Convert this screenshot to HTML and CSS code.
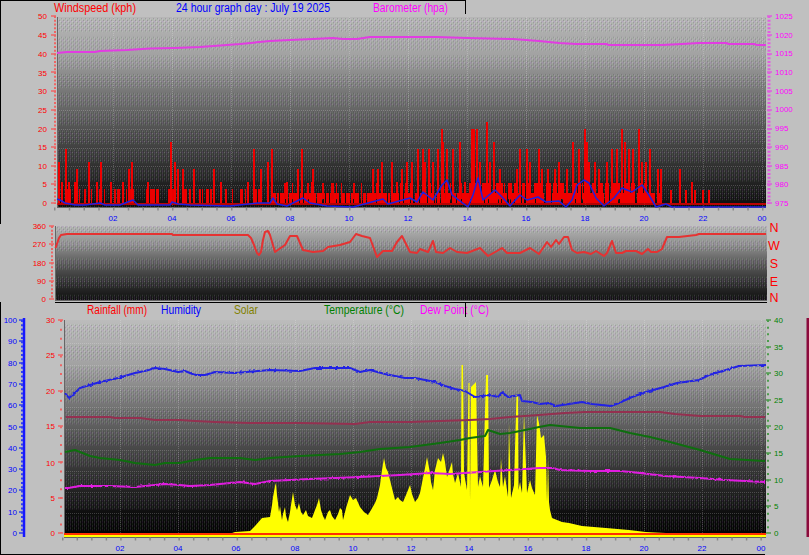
FILE: index.html
```html
<!DOCTYPE html>
<html lang="en">
  <head>
    <meta charset="UTF-8" />
    <meta name="viewport" content="width=device-width, initial-scale=1.0" />
    <title>24 hour graph</title>
    <link rel="stylesheet" href="styles.css">
  </head>
  <body>
    <div class="page">
      <!-- windspeed + barometer -->
      <svg class="graph graph-wind" width="809" height="222" viewBox="0 0 809 222">
        <defs>
          <pattern id="dots" width="4" height="4" patternUnits="userSpaceOnUse">
            <rect class="dot-light" x="0" y="0" width="1" height="1" />
            <rect class="dot-light" x="2" y="2" width="1" height="1" />
            <rect class="dot-violet" x="2" y="0" width="1" height="1" />
            <rect class="dot-green" x="0" y="2" width="1" height="1" />
            <rect class="dot-dark" x="1" y="1" width="1" height="1" />
            <rect class="dot-dark" x="3" y="3" width="1" height="1" />
          </pattern>
          <pattern id="bands-wind" width="8" height="18.7" y="17" patternUnits="userSpaceOnUse">
            <rect class="band" x="0" y="1" width="8" height="14" />
          </pattern>
          <pattern id="bands-dir" width="8" height="18.3" y="226" patternUnits="userSpaceOnUse">
            <rect class="band" x="0" y="0" width="8" height="7" />
            <rect class="band" x="0" y="14" width="8" height="4.3" />
          </pattern>
          <pattern id="bands-outside" width="8" height="21.3" y="322" patternUnits="userSpaceOnUse">
            <rect class="band" x="0" y="2" width="8" height="15" />
          </pattern>
          <linearGradient id="fade-wind" x1="0" y1="0" x2="0" y2="1">
            <stop offset="0" stop-color="#b6b6b6" />
            <stop offset="0.2" stop-color="#a2a2a2" />
            <stop offset="0.4" stop-color="#757575" />
            <stop offset="0.6" stop-color="#505050" />
            <stop offset="0.8" stop-color="#2e2e2e" />
            <stop offset="1" stop-color="#0c0c0c" />
          </linearGradient>
          <linearGradient id="fade-dir" x1="0" y1="0" x2="0" y2="1">
            <stop offset="0" stop-color="#b4b4b4" />
            <stop offset="0.25" stop-color="#909090" />
            <stop offset="0.5" stop-color="#5c5c5c" />
            <stop offset="0.75" stop-color="#333333" />
            <stop offset="1" stop-color="#101010" />
          </linearGradient>
          <linearGradient id="fade-outside" x1="0" y1="0" x2="0" y2="1">
            <stop offset="0" stop-color="#bcbcbc" />
            <stop offset="0.22" stop-color="#a0a0a0" />
            <stop offset="0.38" stop-color="#787878" />
            <stop offset="0.55" stop-color="#505050" />
            <stop offset="0.72" stop-color="#303030" />
            <stop offset="0.9" stop-color="#0c0c0c" />
            <stop offset="1" stop-color="#000000" />
          </linearGradient>
          <filter id="jitter" filterUnits="userSpaceOnUse" x="0" y="0" width="809" height="600">
            <feTurbulence type="fractalNoise" baseFrequency="0.35" numOctaves="1" seed="4" result="noise" />
            <feDisplacementMap in="SourceGraphic" in2="noise" scale="3" xChannelSelector="R" yChannelSelector="G" />
          </filter>
        </defs>

        <path class="frame" d="M0 .5H465.5V14M.5 0V222" />

        <rect class="fill-wind" x="57" y="17" width="709" height="190" />
        <rect class="stipple-wind" x="57" y="17" width="709" height="190" />
        <path class="grid" d="M57 110.5H766M57 129.5H766M57 148H766M57 166.5H766M57 185H766M113 17V207M172 17V207M231 17V207M290 17V207M349 17V207M408 17V207M467 17V207M526 17V207M585 17V207M644 17V207M703 17V207M762 17V207" />
        <path class="axis-edge" d="M57 17V207H766" />

        <path class="wind-low" d="M58 196H270" />
        <path class="wind-low-b" d="M272 198H660" />
        <path class="wind-mid" d="M272 191H470" />
        <path class="wind-mid-b" d="M470 191H650" />
        <path class="wind-bars" d="M59 203V162M62 203V182M66 203V149M69 203V182M75 203V182M77 203V169M89 203V162M97 203V182M101 203V162M111 203V182M123 203V182M129 203V169M132 203V162M148 203V182M171 203V142M175 203V162M178 203V169M183 203V169M194 203V169M214 203V169M221 203V182M248 203V182M254 203V149M261 203V169M268 203V162M272 203V149M287 203V182M298 203V169M302 203V149M312 203V182M313 203V169M373 203V169M378 203V169M382 203V162M392 203V162M397 203V182M402 203V169M407 203V162M412 203V162M418 203V149M423 203V149M425 203V162M429 203V149M433 203V162M438 203V149M442 203V129M443 203V142M447 203V149M453 203V149M460 203V142M465 203V182M472 203V129M474 203V129M477 203V129M480 203V162M487 203V122M490 203V162M494 203V142M500 203V169M517 203V169M520 203V149M527 203V149M530 203V162M539 203V149M542 203V169M548 203V169M555 203V169M559 203V162M567 203V169M573 203V142M579 203V149M585 203V129M587 203V142M589 203V162M595 203V162M599 203V169M607 203V162M612 203V149M617 203V149M622 203V129M625 203V142M629 203V149M633 203V149M639 203V129M642 203V162M646 203V162M650 203V149M658 203V169M661 203V169M671 203V190M680 203V169M686 203V190M692 203V182M695 203V190M703 203V190M709 203V190" />
        <path class="wind-base" d="M57 204H766" />
        <polyline class="line wind-avg" points="57,199 60,200 65,203 70,204 75,205 85,205 100,203 105,205 120,205 133,200 138,205 170,205 172,202 178,204 190,205 230,206 258,203 270,203 273,198 277,204 287,206 303,198 310,203 327,206 353,207 383,199 388,204 410,198 417,202 423,192 433,200 442,185 447,180 452,195 460,201 468,207 473,195 478,178 483,200 495,190 503,198 510,206 520,195 527,200 538,197 546,202 559,201 566,207 572,200 577,185 584,180 589,183 596,198 604,206 614,198 622,188 632,192 642,185 649,195 656,207 666,204 672,207 766,207" />
        <polyline class="line baro" points="57,53 67,52 95,52 100,51 127,50 150,48.5 175,48 200,47 240,44 270,41 290,40 313,39 333,38 343,39 357,39 370,37 437,37 467,38 513,39 539,41 559,43 576,44 606,44 609,45 662,45 682,44 699,43 726,43 729,44 754,44 757,45 766,45" />

        <path class="ticks-red" d="M55 16V204" />
        <path class="major-red" d="M51 16H56M51 35H56M51 54H56M51 72H56M51 91H56M51 110H56M51 129H56M51 147H56M51 166H56M51 184H56M51 203H56" />
        <path class="ticks-pink" d="M769 16V204" />
        <path class="major-pink" d="M767 16H772M767 35H772M767 54H772M767 72H772M767 91H772M767 110H772M767 129H772M767 147H772M767 166H772M767 184H772M767 203H772" />
        <path class="ticks-hour ticks-hour-wind" d="M54 209H766" />

        <text class="legend red" x="54" y="12" textLength="82" lengthAdjust="spacingAndGlyphs">Windspeed (kph)</text>
        <text class="legend blue" x="176" y="12" textLength="154" lengthAdjust="spacingAndGlyphs">24 hour graph day : July 19 2025</text>
        <text class="legend pink" x="373" y="12" textLength="75" lengthAdjust="spacingAndGlyphs">Barometer (hpa)</text>

        <g class="scale red end">
          <text x="47" y="19">50</text><text x="47" y="38">45</text><text x="47" y="57">40</text><text x="47" y="76">35</text><text x="47" y="94">30</text><text x="47" y="113">25</text><text x="47" y="132">20</text><text x="47" y="150">15</text><text x="47" y="169">10</text><text x="47" y="187">5</text><text x="47" y="206">0</text>
        </g>
        <g class="scale pink">
          <text x="775" y="19">1025</text><text x="775" y="38">1020</text><text x="775" y="56">1015</text><text x="775" y="75">1010</text><text x="775" y="94">1005</text><text x="775" y="112">1000</text><text x="775" y="131">995</text><text x="775" y="150">990</text><text x="775" y="169">985</text><text x="775" y="187">980</text><text x="775" y="206">975</text>
        </g>
        <g class="scale blue middle">
          <text x="113" y="221">02</text><text x="172" y="221">04</text><text x="231" y="221">06</text><text x="290" y="221">08</text><text x="349" y="221">10</text><text x="408" y="221">12</text><text x="467" y="221">14</text><text x="526" y="221">16</text><text x="585" y="221">18</text><text x="644" y="221">20</text><text x="703" y="221">22</text><text x="762" y="221">00</text>
        </g>
      </svg>

      <!-- wind direction -->
      <svg class="graph graph-dir" width="809" height="80" viewBox="0 222 809 80">
        <path class="frame" d="M.5 222V224" />
        <rect class="fill-dir" x="55" y="226" width="712" height="74" />
        <rect class="stipple-dir" x="55" y="226" width="712" height="74" />
        <path class="axis-edge" d="M55.5 226V300.5H767" />
        <polyline class="line dir" points="55.5,248 59,238 61,235 67,234 172,234 173,235 248,235 251,238 254,245 257,253 259,255 261,252 263,240 265,232 268,231 270,235 275,252 285,245 290,236 297,236 303,250 313,252 323,251 328,247 340,245 350,242 356,234 362,236 370,238 377,257 383,251 392,251 397,242 402,236 410,252 417,253 420,249 428,252 433,241 436,252 443,253 450,248 457,252 467,253 480,248 488,256 497,251 502,248 507,253 520,253 530,248 539,254 547,242 551,247 556,240 559,244 564,237 568,237 572,250 577,253 584,252 591,254 596,251 604,256 607,253 612,241 616,253 622,253 626,251 636,251 642,254 648,249 651,252 657,252 662,249 667,237 679,237 696,235 699,234 766,234" />
        <path class="ticks-red ticks-dir" d="M52 226V299" />
        <path class="major-red" d="M49 226H54M49 244H54M49 263H54M49 281H54M49 299H54" />
        <g class="scale red end">
          <text x="46" y="229">360</text><text x="46" y="247">270</text><text x="46" y="266">180</text><text x="46" y="284">90</text><text x="46" y="302">0</text>
        </g>
        <g class="compass red">
          <text x="774" y="232">N</text><text x="774" y="250">W</text><text x="774" y="268">S</text><text x="774" y="286">E</text><text x="774" y="302">N</text>
        </g>
      </svg>

      <!-- rainfall, humidity, solar, temperature, dew point -->
      <svg class="graph graph-outside" width="809" height="253" viewBox="0 302 809 253">
        <path class="frame" d="M.5 302V555M0 554.5H765M55 302.5H767M465.5 302V317" />
        <path class="side-bar" d="M808 318V537" />

        <rect class="fill-outside" x="64" y="320" width="702" height="217" />
        <rect class="stipple-outside" x="64" y="320" width="702" height="217" />
        <path class="grid" d="M64 343H766M64 365H766M64 386H766M64 407.5H766M64 429H766M64 450H766M64 471H766M64 492H766M64 513H766M120 320V537M178 320V537M236 320V537M295 320V537M353 320V537M411 320V537M469 320V537M528 320V537M586 320V537M644 320V537M702 320V537M761 320V537" />
        <path class="axis-edge" d="M64.5 320V537H766" />

        <polygon class="solar" points="232,537 232,533 235,532 250,531 255,526 262,518 270,517 272,505 273,497 275,486 276,483 277,495 278,503 279,512 280,506 282,520 283,514 285,507 286,516 288,522 290,512 291,505 293,492 295,505 297,510 299,503 301,512 303,515 306,510 308,516 312,518 315,510 317,505 319,498 321,510 323,516 325,520 328,512 330,510 332,516 335,520 338,514 340,508 342,510 343,520 346,508 350,495 353,500 356,498 360,507 364,512 368,515 371,510 375,503 377,498 380,485 382,470 384,458 386,468 388,472 390,480 393,492 395,500 398,497 400,500 403,502 406,495 410,485 412,494 415,502 418,498 420,493 423,478 425,468 427,457 430,473 431,482 433,490 435,470 438,458 441,462 443,453 445,462 447,477 450,468 452,462 453,474 455,483 458,473 461,487 461.5,365 463,365 464,473 467,490 468.5,383 469.5,383 470,502 471,387 476,382 478,487 480,476 483,487 486,375 488,375 489,488 492,480 495,470 498,482 500,487 501,458 503,487 505,476 508,497 509,423 511,498 514,485 516.5,395 518,395 518.5,490 520,482 522,493 524,413 527,493 530,480 532,488 535,495 537,415 539,423 541,438 544,435 546,457 547,502 548,457 549,502 550,510 552,518 562,522 569,523 582,526 606,528 629,530 646,532 666,533 680,537" />
        <path class="base-yellow" d="M64 536H766" />
        <path class="base-red" d="M64 534H766" />

        <polyline class="line jagged humidity" points="65,393 69,398 75,393 80,388 90,385 100,382 118,378 135,373 145,371 155,368 165,369 178,372 185,371 195,375 205,375 215,372 235,373 270,370 300,371 315,368 350,368 360,372 370,370 385,374 395,376 405,378 415,378 425,380 435,382 445,386 455,389 465,391 475,397 490,395 498,397 502,392 508,397 520,395 522,401 532,402 540,404 549,403 556,406 582,402 592,404 611,406 619,403 632,397 646,392 664,387 677,383 699,380 709,375 726,370 739,366 766,365" />
        <polyline class="line crimson" points="66,417 110,417 115,418 140,418 155,420 180,420 195,421 215,422 250,423 300,423 355,424 370,422 410,422 440,421 470,420 490,419 510,417 539,415 565,413 585,412 660,412 675,414 700,416 740,416 745,417 765,417" />
        <polyline class="line temperature" points="65,452 75,450 90,456 100,458 120,460 135,463 155,465 165,463 180,463 195,460 210,458 240,458 255,460 270,458 300,456 340,454 360,452 380,449 410,447 440,443 460,440 470,438 485,436 488,430 500,434 510,433 530,429 539,427 550,425 580,428 610,428 630,433 650,437 670,442 700,450 720,456 730,459 765,461" />
        <polyline class="line jagged dewpoint" points="65,488 68,488 80,486 110,486 135,487 155,485 165,484 180,485 190,486 210,485 240,482 255,484 270,481 310,479 360,477 400,475 430,473 450,474 480,472 510,470 539,468 552,468 560,470 590,471 620,471 640,473 665,476 700,478 725,480 765,482" />

        <path class="blue-axis" d="M24 318V537" />
        <path class="ticks-blue" d="M22 320V533" />
        <path class="major-blue" d="M19 320H23M19 341H23M19 363H23M19 384H23M19 405H23M19 427H23M19 448H23M19 469H23M19 490H23M19 512H23M19 533H23" />
        <path class="ticks-red ticks-rain" d="M61 320V533" />
        <path class="major-red" d="M58 320H63M58 355H63M58 391H63M58 426H63M58 462H63M58 498H63M58 533H63" />
        <path class="ticks-green" d="M768 320V533" />
        <path class="major-green" d="M766 320H771M766 347H771M766 373H771M766 400H771M766 426H771M766 453H771M766 480H771M766 506H771M766 533H771" />
        <path class="ticks-hour ticks-hour-outside" d="M62 539H766" />

        <text class="legend red" x="87" y="314" textLength="60" lengthAdjust="spacingAndGlyphs">Rainfall (mm)</text>
        <text class="legend blue" x="161" y="314" textLength="40" lengthAdjust="spacingAndGlyphs">Humidity</text>
        <text class="legend olive" x="234" y="314" textLength="24" lengthAdjust="spacingAndGlyphs">Solar</text>
        <text class="legend green" x="324" y="314" textLength="80" lengthAdjust="spacingAndGlyphs">Temperature (°C)</text>
        <text class="legend pink" x="420" y="314" textLength="69" lengthAdjust="spacingAndGlyphs">Dew Point (°C)</text>
        <path class="frame" d="M465.5 302V317" />

        <g class="scale blue end">
          <text x="17" y="323">100</text><text x="17" y="344">90</text><text x="17" y="366">80</text><text x="17" y="387">70</text><text x="17" y="408">60</text><text x="17" y="430">50</text><text x="17" y="451">40</text><text x="17" y="472">30</text><text x="17" y="493">20</text><text x="17" y="515">10</text><text x="17" y="536">0</text>
        </g>
        <g class="scale red end">
          <text x="55" y="323">30</text><text x="55" y="358">25</text><text x="55" y="394">20</text><text x="55" y="429">15</text><text x="55" y="466">10</text><text x="55" y="501">5</text><text x="55" y="536">0</text>
        </g>
        <g class="scale green">
          <text x="774" y="323">40</text><text x="774" y="350">35</text><text x="774" y="376">30</text><text x="774" y="403">25</text><text x="774" y="430">20</text><text x="774" y="456">15</text><text x="774" y="483">10</text><text x="774" y="509">5</text><text x="774" y="536">0</text>
        </g>
        <g class="scale blue middle">
          <text x="120" y="551">02</text><text x="178" y="551">04</text><text x="236" y="551">06</text><text x="295" y="551">08</text><text x="353" y="551">10</text><text x="411" y="551">12</text><text x="469" y="551">14</text><text x="528" y="551">16</text><text x="586" y="551">18</text><text x="644" y="551">20</text><text x="702" y="551">22</text><text x="761" y="551">00</text>
        </g>
      </svg>
    </div>
  </body>
</html>
```
FILE: styles.css
```css
body {
  margin: 0;
  background: #c0c0c0;
  font-family: "Liberation Sans", Arial, sans-serif;
}
.page {
  width: 809px;
  height: 555px;
  display: flex;
  flex-direction: column;
  overflow: hidden;
}
.graph {
  display: block;
  flex: none;
  overflow: visible;
}
path,
polyline,
polygon {
  fill: none;
}

/* backgrounds */
.fill-wind { fill: url(#fade-wind); }
.fill-dir { fill: url(#fade-dir); }
.fill-outside { fill: url(#fade-outside); }
.stipple-wind { fill: url(#bands-wind); }
.stipple-dir { fill: url(#bands-dir); }
.stipple-outside { fill: url(#bands-outside); }
.band { fill: url(#dots); }
.dot-light { fill: rgba(255, 255, 255, 0.24); }
.dot-dark { fill: rgba(0, 0, 0, 0.2); }
.dot-violet { fill: rgba(190, 90, 255, 0.2); }
.dot-green { fill: rgba(110, 255, 110, 0.14); }

/* frame and grid */
.frame {
  stroke: #000;
  stroke-width: 1;
  shape-rendering: crispEdges;
}
.side-bar {
  stroke: #8b0a3c;
  stroke-width: 3;
}
.grid {
  stroke: rgba(255, 255, 255, 0.2);
  stroke-width: 1;
  stroke-dasharray: 1 1;
  shape-rendering: crispEdges;
}
.axis-edge {
  stroke: #666;
  stroke-width: 1;
  shape-rendering: crispEdges;
}

/* series */
.line {
  stroke-width: 2;
  stroke-linejoin: round;
}
.jagged { filter: url(#jitter); }
.baro { stroke: #e23ce2; }
.wind-avg {
  stroke: #2020e0;
  stroke-width: 1.5;
}
.dir { stroke: #e63232; }
.humidity { stroke: #2222e4; }
.crimson { stroke: #943050; }
.temperature { stroke: #0e6e0e; }
.dewpoint { stroke: #e01ee0; }
.solar { fill: #ffff00; }
.base-yellow {
  stroke: #ffff00;
  stroke-width: 2;
}
.base-red {
  stroke: #ff3000;
  stroke-width: 2;
}
.wind-bars {
  stroke: #f00000;
  stroke-width: 2;
}
.wind-base {
  stroke: #f00000;
  stroke-width: 1.5;
}
.wind-low {
  stroke: #e80000;
  stroke-width: 14;
  stroke-dasharray: 2 1 1 3 3 1 2 8 1 4 2 5 1 7 3 2 1 9 2 1 3 6 1 3 4 12 2 2 5 1 3 9 2 1 4 2 1 6 3 2 2 8;
}
.wind-low-b {
  stroke: #f00000;
  stroke-width: 10;
  stroke-dasharray: 4 1 2 1 5 2 1 1 3 1 6 1 2 2 4 1;
}
.wind-mid {
  stroke: #e80000;
  stroke-width: 16;
  stroke-dasharray: 1 11 2 6 1 14 2 3 1 9 2 7 3 2 1 4;
}
.wind-mid-b {
  stroke: #f00000;
  stroke-width: 16;
  stroke-dasharray: 3 2 2 1 1 3 4 2 2 4 1 1;
}

/* axis ticks */
.ticks-red,
.major-red {
  stroke: #ee6464;
}
.ticks-red {
  stroke-width: 2;
  stroke-dasharray: 2 1.74;
}
.ticks-dir { stroke-dasharray: 2 1.66; }
.ticks-rain { stroke-dasharray: 2 6.85; }
.major-red,
.major-pink,
.major-blue,
.major-green {
  stroke-width: 1.5;
}
.ticks-pink,
.major-pink {
  stroke: #e05ee0;
}
.ticks-pink {
  stroke-width: 3;
  stroke-dasharray: 2 1.74;
}
.blue-axis {
  stroke: #1818ff;
  stroke-width: 2.5;
}
.ticks-blue,
.major-blue {
  stroke: #3040f0;
}
.ticks-blue {
  stroke-width: 2;
  stroke-dasharray: 2 2.26;
}
.ticks-green,
.major-green {
  stroke: #4c9c4c;
}
.ticks-green {
  stroke-width: 2;
  stroke-dasharray: 2 4.65;
}
.ticks-hour {
  stroke: #8a8a8a;
  stroke-width: 3;
}
.ticks-hour-wind { stroke-dasharray: 1.5 13.25; }
.ticks-hour-outside { stroke-dasharray: 1.5 13.05; }

/* text */
.legend {
  font-size: 12px;
}
.scale {
  font-size: 8px;
}
.compass {
  font-size: 12.5px;
  text-anchor: middle;
}
.end { text-anchor: end; }
.middle { text-anchor: middle; }
.red { fill: #ff0000; }
.blue { fill: #0000ff; }
.pink { fill: #ff00ff; }
.green { fill: #008000; }
.olive { fill: #808000; }
```
